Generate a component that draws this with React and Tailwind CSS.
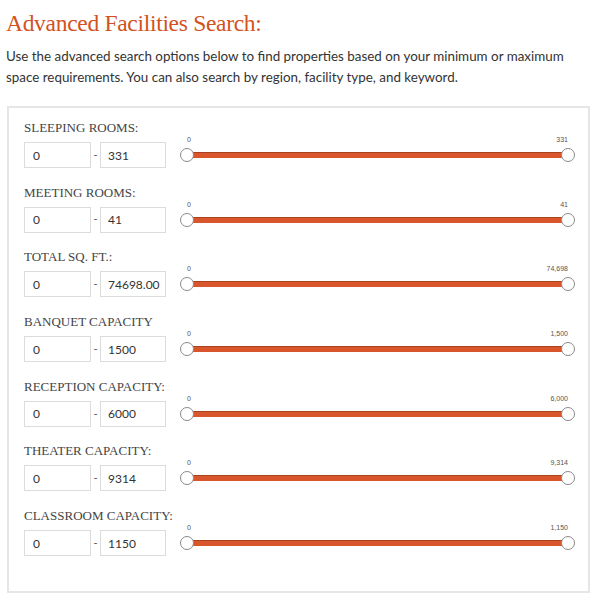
import React from 'react';

const rows = [
  { label: 'SLEEPING ROOMS:', max: '331', shown: '331' },
  { label: 'MEETING ROOMS:', max: '41', shown: '41' },
  { label: 'TOTAL SQ. FT.:', max: '74698.00', shown: '74,698' },
  { label: 'BANQUET CAPACITY', max: '1500', shown: '1,500' },
  { label: 'RECEPTION CAPACITY:', max: '6000', shown: '6,000' },
  { label: 'THEATER CAPACITY:', max: '9314', shown: '9,314' },
  { label: 'CLASSROOM CAPACITY:', max: '1150', shown: '1,150' },
];

// slider drawing: track, thumbs and value labels overlap, so they sit absolutely inside it
function RangeSlider({ max }) {
  return (
    <div className="relative flex-1 h-[26px] ml-[14px] mr-[13px]">
      <div className="absolute left-[7px] right-[7px] top-[10px] h-[6px] bg-[#d9552c] border-t border-[#a9421e]" />
      <span className="absolute left-[7px] top-[-6px] text-[7px] leading-[8px] text-[#555] font-['Liberation_Sans',sans-serif]">0</span>
      <span className="absolute right-[7px] top-[-6px] text-[7px] leading-[8px] text-[#555] font-['Liberation_Sans',sans-serif]">{max}</span>
      <div className="absolute left-0 top-[6px] w-[14px] h-[14px] rounded-full bg-white border-[1.5px] border-[#8a8a8a]" />
      <div className="absolute right-0 top-[6px] w-[14px] h-[14px] rounded-full bg-white border-[1.5px] border-[#8a8a8a]" />
    </div>
  );
}

function RangeRow({ row }) {
  return (
    <div>
      <div className="text-[13px] leading-[16px] text-[#444] font-['Liberation_Serif',serif]">
        {row.label}
      </div>
      <div className="flex items-center mt-[6px]">
        <input
          readOnly
          value="0"
          className="w-[67px] h-[26px] border border-[#dcdcdc] pl-[8px] text-[12px] text-[#333] font-['Lato',sans-serif] outline-none"
        />
        <span className="w-[9px] text-center text-[11px] text-[#555] font-['Lato',sans-serif]">-</span>
        <input
          readOnly
          value={row.max}
          className="w-[66px] h-[26px] border border-[#dcdcdc] pl-[7px] text-[12px] text-[#333] font-['Lato',sans-serif] outline-none"
        />
        <RangeSlider max={row.shown} />
      </div>
    </div>
  );
}

export default function App() {
  return (
    <div className="w-[600px] h-[610px] bg-white px-[6px] pt-[8px]">
      <h1 className="text-[23.5px] leading-[30px] tracking-[-0.3px] text-[#d2521f] font-['Liberation_Serif',serif]">
        Advanced Facilities Search:
      </h1>
      <p className="mt-[8px] text-[13.4px] leading-[21px] text-[#333] font-['Lato',sans-serif]">
        Use the advanced search options below to find properties based on your minimum or maximum
        space requirements. You can also search by region, facility type, and keyword.
      </p>
      <div className="mt-[18px] ml-[1px] w-[583px] h-[487px] border-2 border-[#e6e6e6] pl-[15px] pt-[12px] flex flex-col gap-[16.7px]">
        {rows.map(row => (
          <RangeRow key={row.label} row={row} />
        ))}
      </div>
    </div>
  );
}
